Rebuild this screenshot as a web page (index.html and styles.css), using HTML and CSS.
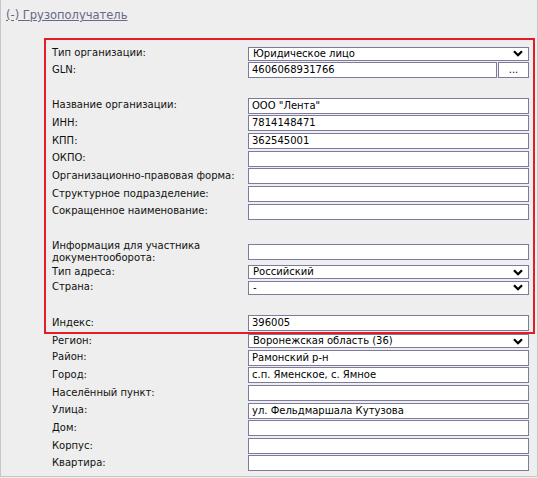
FILE: index.html
```html
<!DOCTYPE html>
<html lang="ru">
<head>
<meta charset="utf-8">
<link rel="stylesheet" href="styles.css">
</head>
<body>
<div class="panel">
  <a class="toggle" href="#">(-) Грузополучатель</a>
  <div class="form">
    <div class="row r-first"><span class="label">Тип организации:</span><div class="field select"><span>Юридическое лицо</span><svg class="chev" viewBox="0 0 10 7" width="10" height="7"><polyline points="1,1.2 5,5.2 9,1.2" fill="none" stroke="#000" stroke-width="2.3"/></svg></div></div>
    <div class="row r-s15"><span class="label">GLN:</span><div class="gln"><div class="field input">4606068931766</div><div class="btn">...</div></div></div>
    <div class="row r-gap"><span class="label">Название организации:</span><div class="field input">ООО "Лента"</div></div>
    <div class="row"><span class="label">ИНН:</span><div class="field input">7814148471</div></div>
    <div class="row"><span class="label">КПП:</span><div class="field input">362545001</div></div>
    <div class="row"><span class="label">ОКПО:</span><div class="field input"></div></div>
    <div class="row"><span class="label">Организационно-правовая форма:</span><div class="field input"></div></div>
    <div class="row"><span class="label">Структурное подразделение:</span><div class="field input"></div></div>
    <div class="row"><span class="label">Сокращенное наименование:</span><div class="field input"></div></div>
    <div class="row r-gap r-tall"><span class="label">Информация для участника документооборота:</span><div class="field input"></div></div>
    <div class="row r-tight"><span class="label">Тип адреса:</span><div class="field select"><span>Российский</span><svg class="chev" viewBox="0 0 10 7" width="10" height="7"><polyline points="1,1.2 5,5.2 9,1.2" fill="none" stroke="#000" stroke-width="2.3"/></svg></div></div>
    <div class="row r-s13"><span class="label">Страна:</span><div class="field select"><span>-</span><svg class="chev" viewBox="0 0 10 7" width="10" height="7"><polyline points="1,1.2 5,5.2 9,1.2" fill="none" stroke="#000" stroke-width="2.3"/></svg></div></div>
    <div class="row r-gap2"><span class="label">Индекс:</span><div class="field input">396005</div></div>
    <div class="row r-s3"><span class="label">Регион:</span><div class="field select"><span>Воронежская область (36)</span><svg class="chev" viewBox="0 0 10 7" width="10" height="7"><polyline points="1,1.2 5,5.2 9,1.2" fill="none" stroke="#000" stroke-width="2.3"/></svg></div></div>
    <div class="row"><span class="label">Район:</span><div class="field input">Рамонский р-н</div></div>
    <div class="row"><span class="label">Город:</span><div class="field input">с.п. Яменское, с. Ямное</div></div>
    <div class="row"><span class="label">Населённый пункт:</span><div class="field input"></div></div>
    <div class="row"><span class="label">Улица:</span><div class="field input">ул. Фельдмаршала Кутузова</div></div>
    <div class="row"><span class="label">Дом:</span><div class="field input"></div></div>
    <div class="row"><span class="label">Корпус:</span><div class="field input"></div></div>
    <div class="row"><span class="label">Квартира:</span><div class="field input"></div></div>
  </div>
  <div class="highlight"></div>
</div>
</body>
</html>
```

FILE: styles.css
```css
html, body {
  margin: 0;
  padding: 0;
  background: #edeeed;
}
body {
  font-family: "DejaVu Sans", Verdana, sans-serif;
  font-size: 10px;
  color: #000;
}
.panel {
  position: relative;
  box-sizing: border-box;
  width: 538px;
  height: 477px;
  border: 1px solid #c6c6c6;
  border-top: none;
  background: #edeeed;
  padding: 9px 0 0 5px;
}
.toggle {
  display: inline-block;
  font-size: 11.5px;
  line-height: 13px;
  color: #686888;
  text-decoration: underline;
}
.form {
  margin: 24.5px 0 0 46px;
}
.row {
  display: grid;
  grid-template-columns: 196px 281px;
  align-items: center;
  margin-top: 1.65px;
}
.row.r-first { margin-top: 0; }
.row.r-s15 { margin-top: 1.5px; }
.row.r-gap { margin-top: 19.7px; }
.row.r-tight { margin-top: 0.2px; }
.row.r-s13 { margin-top: 1.3px; }
.row.r-gap2 { margin-top: 20.3px; }
.row.r-s3 { margin-top: 3px; }
.row.r-tall { height: 26px; }
.label {
  line-height: 12.5px;
  white-space: normal;
  color: #111;
}
.r-tall .label { width: 160px; }
.field {
  box-sizing: border-box;
  border: 1px solid #7d7a9e;
  background: #fff;
  color: #000;
  white-space: nowrap;
  overflow: hidden;
}
.input {
  height: 16px;
  line-height: 14px;
  padding: 0 3px;
}
.select {
  height: 14px;
  line-height: 12px;
  padding: 0 5px 0 4px;
  display: flex;
  align-items: center;
  justify-content: space-between;
}
.chev { display: block; flex: none; }
.gln {
  display: flex;
  gap: 1px;
}
.gln .input { width: 249px; flex: none; }
.btn {
  box-sizing: border-box;
  width: 31px;
  height: 16px;
  border: 1px solid #7d7a9e;
  background: #fff;
  text-align: center;
  line-height: 14px;
  color: #000;
}
.highlight {
  position: absolute;
  left: 43px;
  top: 38px;
  width: 491px;
  height: 296px;
  box-sizing: border-box;
  border: 2px solid #e41d25;
  pointer-events: none;
}
```
